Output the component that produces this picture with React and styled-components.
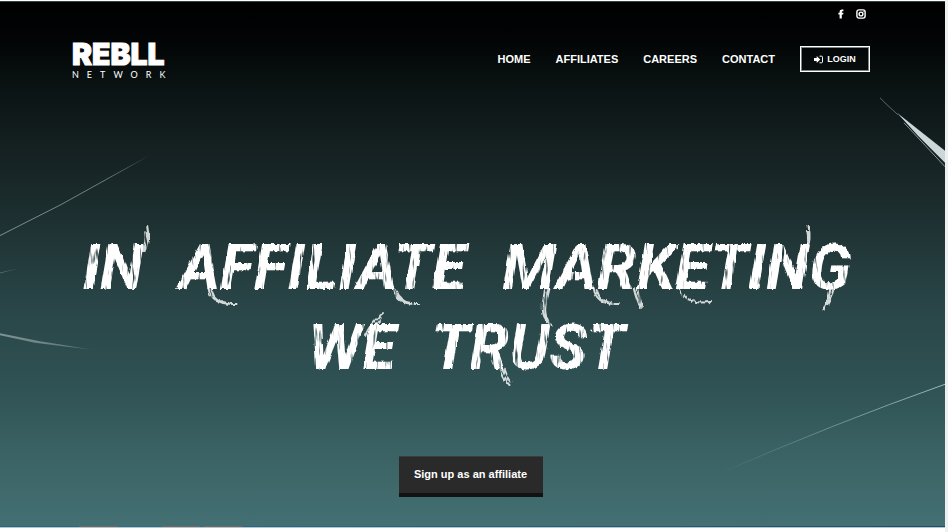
import React from "react";
import styled, { createGlobalStyle } from "styled-components";

const GlobalStyle = createGlobalStyle`
  *, *::before, *::after { box-sizing: border-box; }
  html { height: 100%; background: #ffffff; }
  body { margin: 0; height: 100%; font-family: "Liberation Sans", Arial, sans-serif; }
  #root { height: 100%; }
`;

const Page = styled.div`
  min-height: 100%;
  padding: 1px 3px 4px 0;
  display: flex;
  flex-direction: column;
  background: linear-gradient(to left, #eeeff0 3px, #ffffff 3px);
`;

const Hero = styled.div`
  position: relative;
  flex: 1;
  display: flex;
  flex-direction: column;
  overflow: hidden;
  color: #ffffff;
  border-top: 1px solid #3b4444;
  background: linear-gradient(
    180deg,
    #000000 0%,
    #020405 7%,
    #0b1414 17%,
    #141f20 27%,
    #1d2f30 41%,
    #284345 56%,
    #305355 74%,
    #3b6365 87%,
    #447073 100%
  );
`;

const Streaks = styled.svg`
  position: absolute;
  inset: 0;
  width: 100%;
  height: 100%;
  pointer-events: none;
`;

const Shell = styled.header`
  position: relative;
  width: 100%;
  padding: 0 75px 0 72px;
`;

const Social = styled.nav`
  height: 23px;
  display: flex;
  justify-content: flex-end;
  align-items: center;
  gap: 10px;
  padding-right: 4px;
`;

const SocialLink = styled.a`
  display: flex;
  color: #ffffff;
`;

const Bar = styled.div`
  height: 68px;
  display: flex;
  align-items: center;
  justify-content: space-between;
`;

const Logo = styled.a`
  display: flex;
  flex-direction: column;
  color: #ffffff;
  text-decoration: none;
`;

const LogoName = styled.span`
  font: 900 30px/32px Inter, sans-serif;
  -webkit-text-stroke: 1px #ffffff;
`;

const LogoSub = styled.span`
  font: 400 9px/10px Lato, sans-serif;
  letter-spacing: 8px;
`;

const Menu = styled.nav`
  display: flex;
  align-items: center;
  gap: 25px;
`;

const MenuLink = styled.a`
  font-size: 11px;
  line-height: 16px;
  font-weight: 700;
  color: #ffffff;
  text-decoration: none;
`;

const Login = styled.a`
  height: 26px;
  width: 70px;
  display: flex;
  align-items: center;
  justify-content: center;
  gap: 4px;
  border: 1px solid #ffffff;
  box-shadow: inset 0 0 0 1px #7d8282;
  color: #ffffff;
  font-size: 9px;
  font-weight: 700;
  text-decoration: none;
`;

const Main = styled.main`
  position: relative;
  flex: 1;
  display: flex;
  flex-direction: column;
  align-items: center;
  justify-content: space-between;
  padding: 135px 20px 29px 16px;
`;

const Title = styled.h1`
  position: relative;
  margin: 0;
  padding-right: 8px;
  font: italic 700 63px/80px Roboto, sans-serif;
  filter: url(#brush);
`;

const Line = styled.span`
  display: flex;
  justify-content: center;
  gap: 36px;
`;

const Flourishes = styled.svg`
  position: absolute;
  inset: 0;
  width: 100%;
  height: 100%;
  overflow: visible;
  pointer-events: none;
`;

const SignUp = styled.button`
  height: 41px;
  width: 144px;
  padding: 0 0 2px;
  border: 0;
  border-top: 1px solid #3a3d3d;
  border-bottom: 4px solid #111313;
  background: #2a2a2a;
  color: #ffffff;
  font: 700 11px/16px "Liberation Sans", Arial, sans-serif;
  white-space: nowrap;
  cursor: pointer;
`;

const Edge = styled.div`
  height: 2px;
  border-bottom: 1px solid #a9c9d8;
  background: linear-gradient(
    90deg,
    #31637a 79px,
    #78665c 79px 118px,
    #386b80 118px 162px,
    #78665c 162px 200px,
    #386b80 200px 204px,
    #78665c 204px 242px,
    #34657d 242px,
    #264a66 100%
  );
`;

const LINKS = ["Home", "Affiliates", "Careers", "Contact"];
const HEADLINE = [["IN", "AFFILIATE", "MARKETING"], ["WE", "TRUST"]];

function FacebookIcon() {
  return (
    <svg width="10" height="10" viewBox="0 0 10 10" aria-hidden="true">
      <path fill="currentColor" d="M3.6 9.5V5.6H2.4V3.8h1.2V2.7C3.6 1.2 4.6.5 6 .5h1.4v1.7h-.8c-.6 0-.8.2-.8.7v.9h1.6l-.2 1.8H5.8v3.9z" />
    </svg>
  );
}

function InstagramIcon() {
  return (
    <svg width="10" height="10" viewBox="0 0 10 10" fill="none" stroke="currentColor" strokeWidth="1.4" aria-hidden="true">
      <rect x=".9" y=".9" width="8.2" height="8.2" rx="2" />
      <circle cx="5" cy="5" r="1.9" />
      <circle cx="7.4" cy="2.6" r=".4" strokeWidth=".5" />
    </svg>
  );
}

function LoginIcon() {
  return (
    <svg width="9" height="9" viewBox="0 0 9 9" aria-hidden="true">
      <path fill="currentColor" d="M0 3h2.7V1L6.3 4.5 2.7 8V6H0z" />
      <path fill="none" stroke="currentColor" d="M5.5 1.2h2c.6 0 1 .3 1 .9v4.8c0 .6-.4.9-1 .9h-2" />
    </svg>
  );
}

function BackgroundStreaks() {
  return (
    <Streaks viewBox="0 0 945 525" preserveAspectRatio="none" aria-hidden="true">
      <defs>
        <linearGradient id="fadeRight">
          <stop offset="0" stopColor="#7d9292" />
          <stop offset=".7" stopColor="#6a7c7c" />
          <stop offset="1" stopColor="#7d9292" stopOpacity="0" />
        </linearGradient>
        <linearGradient id="fadeLeft">
          <stop offset="0" stopColor="#86aaaa" stopOpacity="0" />
          <stop offset=".5" stopColor="#86aaaa" stopOpacity=".65" />
          <stop offset="1" stopColor="#9bbcbc" />
        </linearGradient>
        <filter id="brush" x="-3%" y="-8%" width="106%" height="116%" colorInterpolationFilters="sRGB">
          <feTurbulence type="fractalNoise" baseFrequency=".3 .05" numOctaves="2" seed="4" result="grain" />
          <feDisplacementMap in="SourceGraphic" in2="grain" scale="4" xChannelSelector="R" yChannelSelector="G" result="rough" />
          <feColorMatrix in="grain" type="matrix" values="0 0 0 0 1  0 0 0 0 1  0 0 0 0 1  0 0 -5 0 4.1" result="bristles" />
          <feComposite in="rough" in2="bristles" operator="in" />
        </filter>
      </defs>
      <path d="M0 234 61 203 149 154" fill="none" stroke="url(#fadeRight)" />
      <path d="M0 271 18 267 0 272z" fill="#526b6b" />
      <path d="M0 332 40 340 96 349 35 341.5 0 334z" fill="url(#fadeRight)" />
      <path d="M718 473Q835 422 945 383" fill="none" stroke="url(#fadeLeft)" />
      <path d="M880 96 887 103 898 113" fill="none" stroke="#586767" />
      <path d="M897 111 945 149V161L918 134z" fill="#cbd7d9" />
      <path d="M904 121 945 165" fill="none" stroke="#87989a" />
    </Streaks>
  );
}

function BrushFlourishes() {
  return (
    <Flourishes viewBox="0 0 774 160" preserveAspectRatio="none" fill="none" stroke="#ffffff" strokeWidth="2" strokeOpacity=".8" strokeLinecap="round" aria-hidden="true">
      <path d="M62 24Q68 12 65 -2M60 24Q66 14 64 4" />
      <path d="M126 60Q128 77 154 76M129 62Q132 74 146 75" />
      <path d="M310 60Q312 77 336 76M313 62Q316 74 328 75" />
      <path d="M462 60C456 84 460 92 468 97M465 60C460 80 461 88 465 93" />
      <path d="M510 60Q512 77 534 76M513 62Q516 74 528 75" />
      <path d="M550 60Q553 72 557 80M553 60Q556 72 558 78" />
      <path d="M594 60Q602 77 626 74" />
      <path d="M722 22Q727 10 724 -2M720 22Q725 12 723 4" />
      <path d="M746 60Q744 72 739 82M749 60Q748 68 743 76" />
      <path d="M282 108Q288 94 300 85M286 108Q291 98 298 90" />
      <path d="M416 138Q419 150 426 157M419 138Q423 149 427 154" />
    </Flourishes>
  );
}

export default function App() {
  return (
    <>
      <GlobalStyle />
      <Page>
        <Hero>
          <BackgroundStreaks />
          <Shell>
            <Social aria-label="Social media">
              <SocialLink href="#facebook" aria-label="Facebook"><FacebookIcon /></SocialLink>
              <SocialLink href="#instagram" aria-label="Instagram"><InstagramIcon /></SocialLink>
            </Social>
            <Bar>
              <Logo href="#home">
                <LogoName>REBLL</LogoName>
                <LogoSub>NETWORK</LogoSub>
              </Logo>
              <Menu aria-label="Main">
                {LINKS.map((label) => (
                  <MenuLink key={label} href={`#${label.toLowerCase()}`}>{label.toUpperCase()}</MenuLink>
                ))}
                <Login href="#login"><LoginIcon />LOGIN</Login>
              </Menu>
            </Bar>
          </Shell>
          <Main>
            <Title>
              {HEADLINE.map((words) => (
                <Line key={words[0]}>
                  {words.map((word) => (
                    <React.Fragment key={word}><span>{word}</span>{" "}</React.Fragment>
                  ))}
                </Line>
              ))}
              <BrushFlourishes />
            </Title>
            <SignUp type="button">Sign up as an affiliate</SignUp>
          </Main>
        </Hero>
        <Edge />
      </Page>
    </>
  );
}
